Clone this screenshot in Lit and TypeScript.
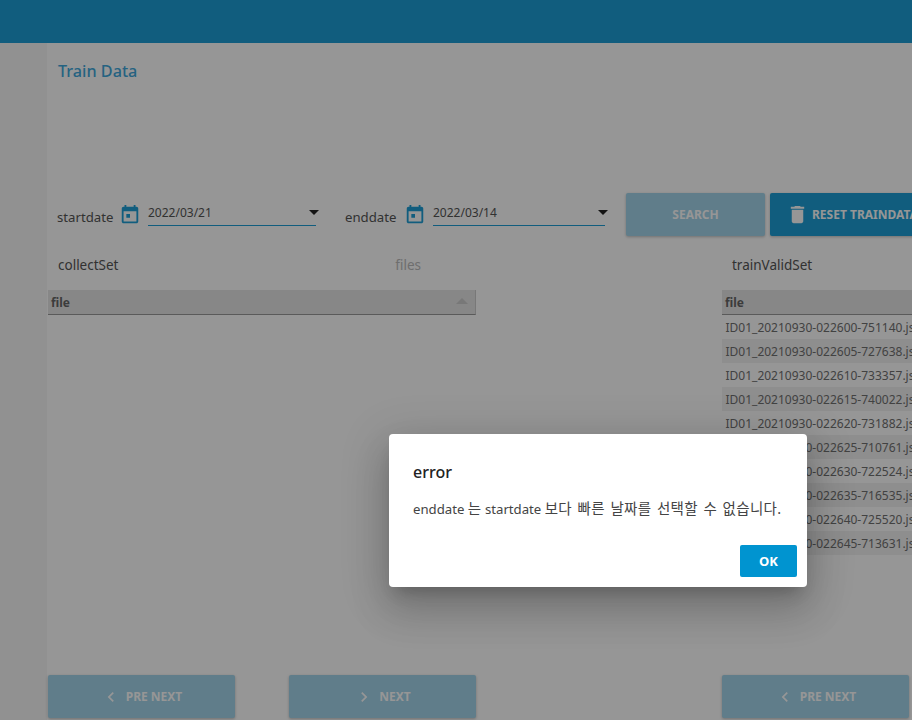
import { LitElement, css, html } from 'lit';
import { customElement } from 'lit/decorators.js';

const FILES = [
    '022600-751140',
    '022605-727638',
    '022610-733357',
    '022615-740022',
    '022620-731882',
    '022625-710761',
    '022630-722524',
    '022635-716535',
    '022640-725520',
    '022645-713631',
];

const calendar = html`<svg class="cal" viewBox="0 0 24 24"><path d="M19 3h-1V1h-2v2H8V1H6v2H5c-1.11 0-1.99.9-1.99 2L3 19c0 1.1.89 2 2 2h14c1.1 0 2-.9 2-2V5c0-1.1-.9-2-2-2zm0 16H5V8h14v11zM8 11h4v4H8z"/></svg>`;
const trash = html`<svg class="trash" viewBox="0 0 24 24"><path d="M6 19c0 1.1.9 2 2 2h8c1.1 0 2-.9 2-2V7H6v12zM19 4h-3.5l-1-1h-5l-1 1H5v2h14V4z"/></svg>`;
const left = html`<svg class="chev" viewBox="0 0 24 24"><path d="M15.41 7.41L14 6l-6 6 6 6 1.41-1.41L10.83 12z"/></svg>`;
const right = html`<svg class="chev" viewBox="0 0 24 24"><path d="M10 6L8.59 7.41 13.17 12l-4.58 4.59L10 18l6-6z"/></svg>`;

@customElement('app-root')
export class AppRoot extends LitElement {

    // STYLE

    static styles = css`
        :host{
            display: block;
            position: relative;
            width: 912px;
            height: 720px;
            overflow: hidden;
            background: white;
            font-family: "Noto Sans", "Noto Sans CJK KR", sans-serif;
            color: #555;
        }

        .header{
            height: 43px;
            background: #1d9fd6;
        }

        .main{
            display: flex;
            height: 677px;
        }
        .side{
            flex: none;
            width: 47px;
            background: #f6f6f6;
        }
        .content{
            flex: none;
            width: 1054px;
            margin-left: 1px;
            display: flex;
            flex-direction: column;
        }

        .title{
            margin: 17px 0 0 10px;
            height: 22px;
            line-height: 22px;
            font-size: 16.2px;
            font-weight: 500;
            color: #3fa8dc;
        }

        .filters{
            display: flex;
            align-items: flex-start;
            margin: 111px 0 0 9px;
            height: 44px;
        }
        .label{
            flex: none;
            width: 56px;
            font-size: 13.2px;
            line-height: 20px;
            margin-top: 14px;
        }
        .label.end{
            width: 53px;
        }
        .cal{
            flex: none;
            width: 22px;
            height: 22px;
            margin: 11px 0 0 6px;
            fill: #1d9fd6;
        }
        .date{
            position: relative;
            height: 32px;
            margin-left: 7px;
            border-bottom: 1px solid #1d9fd6;
            font-size: 12px;
            line-height: 18px;
            box-sizing: content-box;
        }
        .date span{
            display: block;
            margin: 11px 0 0 0;
        }
        .date i{
            position: absolute;
            right: -3px;
            top: 17px;
            border: 5px solid transparent;
            border-top-color: #222;
            border-bottom-width: 0;
        }
        .date.start{ width: 168px; margin-right: 29px; }
        .date.end{ width: 172px; margin-right: 21px; }

        .btn{
            display: flex;
            align-items: center;
            justify-content: center;
            box-sizing: border-box;
            height: 43px;
            border-radius: 2px;
            background: #1d9fd6;
            color: white;
            font-size: 12px;
            font-weight: 700;
            box-shadow: 0 1px 3px rgba(0, 0, 0, 0.25);
        }
        .btn.off{
            background: #a3d4ea;
            color: white;
        }
        .search{ width: 139px; margin-right: 5px; }
        .reset{
            width: 170px;
            justify-content: flex-start;
            padding-left: 16px;
            white-space: nowrap;
        }
        .trash{
            flex: none;
            width: 23px;
            height: 23px;
            margin-right: 3px;
            fill: white;
        }
        .chev{
            width: 20px;
            height: 20px;
            margin-right: 5px;
            fill: white;
        }

        .columns{
            flex: 1;
            display: grid;
            grid-template-columns: 428px 246px 332px;
            margin-top: 16px;
        }
        .col{
            display: flex;
            flex-direction: column;
        }
        .col-head{
            display: flex;
            justify-content: space-between;
            height: 22px;
            line-height: 24px;
            padding: 0 55px 0 10px;
            font-size: 13.5px;
            margin-bottom: 15px;
        }
        .muted{
            color: #bbb;
        }

        .table{
            flex: 1;
        }
        .thead{
            display: flex;
            align-items: center;
            justify-content: space-between;
            box-sizing: border-box;
            height: 25px;
            padding: 0 7px 0 3px;
            background: #e6e6e6;
            border-bottom: 1px solid #999;
            font-size: 12px;
            font-weight: 700;
            color: #666;
        }
        .thead.bordered{
            border-right: 1px solid #ccc;
        }
        .sort{
            border: 6px solid transparent;
            border-bottom: 6px solid #ccc;
            border-top-width: 0;
            margin-top: -3px;
        }
        .row{
            height: 24px;
            line-height: 26px;
            padding-left: 3.5px;
            font-size: 12px;
            color: #707070;
            white-space: nowrap;
        }
        .row:nth-child(even){
            background: #f2f2f2;
        }

        .pager{
            display: flex;
            justify-content: space-between;
            height: 43px;
            margin-bottom: 2px;
        }
        .pager .btn{
            width: 187px;
        }

        .scrim{
            position: absolute;
            inset: 0;
            display: flex;
            background: rgba(0, 0, 0, 0.41);
        }
        .dialog{
            position: absolute;
            left: 389px;
            top: 434px;
            box-sizing: border-box;
            width: 418px;
            height: 153px;
            padding: 26px 10px 10px 24px;
            display: flex;
            flex-direction: column;
            border-radius: 4px;
            background: white;
            box-shadow: 0 11px 15px -7px rgba(0, 0, 0, 0.2), 0 24px 38px 3px rgba(0, 0, 0, 0.14), 0 9px 46px 8px rgba(0, 0, 0, 0.12);
        }
        .dialog h2{
            margin: 0;
            font-size: 16px;
            line-height: 24px;
            font-weight: 500;
            color: #222;
        }
        .dialog p{
            margin: 14px 0 0;
            font-size: 13.2px;
            line-height: 20px;
            color: #444;
            white-space: nowrap;
        }
        .ko{
            font-size: 14.5px;
            letter-spacing: 0.3px;
            word-spacing: 1.5px;
        }
        .actions{
            display: flex;
            justify-content: flex-end;
            margin-top: auto;
        }
        .ok{
            width: 57px;
            height: 32px;
            line-height: 32px;
            text-align: center;
            border-radius: 2px;
            background: #0094d0;
            color: white;
            font-size: 13px;
            font-weight: 700;
        }
    `;



    // MARKUP

    render() {
        return html`
            <header class="header"></header>

            <div class="main">
                <aside class="side"></aside>

                <section class="content">
                    <div class="title">Train Data</div>

                    <div class="filters">
                        <span class="label">startdate</span>
                        ${calendar}
                        <div class="date start"><span>2022/03/21</span><i></i></div>

                        <span class="label end">enddate</span>
                        ${calendar}
                        <div class="date end"><span>2022/03/14</span><i></i></div>

                        <div class="btn off search">SEARCH</div>
                        <div class="btn reset">${trash}RESET TRAINDATA</div>
                    </div>

                    <div class="columns">
                        <div class="col">
                            <div class="col-head"><span>collectSet</span><span class="muted">files</span></div>
                            <div class="table">
                                <div class="thead bordered"><span>file</span><i class="sort"></i></div>
                            </div>
                            <div class="pager">
                                <div class="btn off">${left}PRE NEXT</div>
                                <div class="btn off">${right}NEXT</div>
                            </div>
                        </div>

                        <div class="col"></div>

                        <div class="col">
                            <div class="col-head"><span>trainValidSet</span></div>
                            <div class="table">
                                <div class="thead"><span>file</span></div>
                                <div>
                                    ${FILES.map((f) => html`<div class="row">ID01_20210930-${f}.json</div>`)}
                                </div>
                            </div>
                            <div class="pager">
                                <div class="btn off">${left}PRE NEXT</div>
                            </div>
                        </div>
                    </div>
                </section>
            </div>

            <div class="scrim">
                <div class="dialog">
                    <h2>error</h2>
                    <p>enddate <span class="ko">는</span> startdate <span class="ko">보다 빠른 날짜를 선택할 수 없습니다.</span></p>
                    <div class="actions"><div class="ok">OK</div></div>
                </div>
            </div>
            `;
    }
}
